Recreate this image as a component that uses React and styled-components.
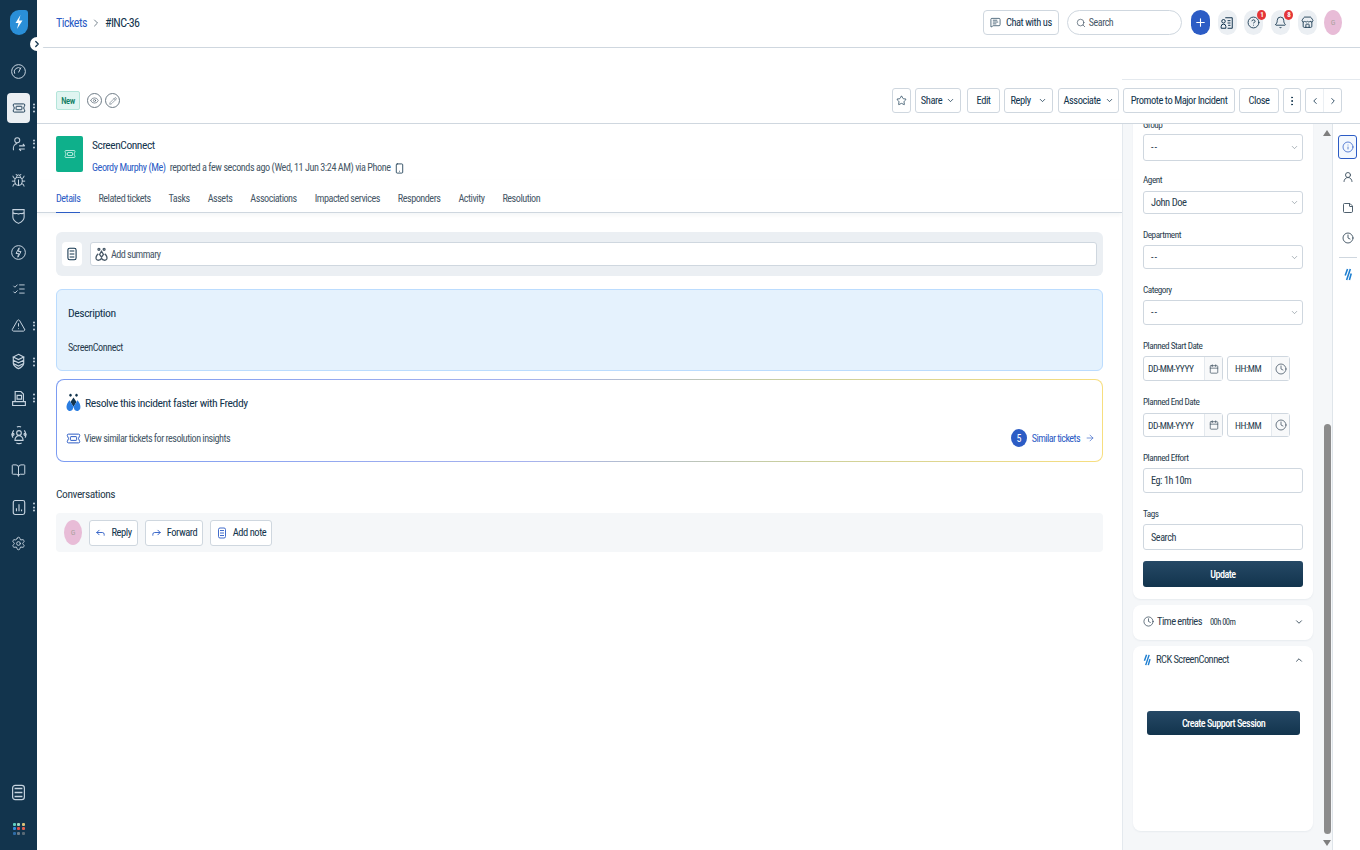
import React from "react";
import styled, { createGlobalStyle } from "styled-components";
import {
  ChevronDown, ChevronUp, ChevronLeft, ChevronRight, Star, Search, Plus, Eye, Pencil, Smartphone,
  Reply as ReplyIcon, Forward, ArrowRight, Calendar, Clock, Info, Bell, CircleHelp, Store, MessageSquareText,
  EllipsisVertical, Bug, ListChecks, TriangleAlert, BookOpen, Settings, UserRound, StickyNote,
} from "lucide-react";

const GlobalStyle = createGlobalStyle`
  html, body { margin: 0; padding: 0; height: 100%; background: #fff; }
  body {
    font-family: "Roboto", "Liberation Sans", sans-serif;
    font-stretch: 75%;
    letter-spacing: -0.45px;
    white-space: nowrap;
    color: #12344d;
    overflow: hidden;
  }
  * { box-sizing: border-box; }
  button { letter-spacing: inherit; font-stretch: inherit; }
`;

const Page = styled.div`
  display: flex;
  width: 1360px;
  height: 850px;
  overflow: hidden;
`;

/* left nav */
const Sidebar = styled.nav`
  position: relative;
  width: 37px;
  flex: none;
  background: #12344d;
  display: flex;
  flex-direction: column;
  align-items: center;
  padding: 10px 0 3px;
`;
const Logo = styled.div`
  height: 43px;
  width: 100%;
  display: flex;
  justify-content: center;
  align-items: flex-start;
`;
const NavItem = styled.div`
  position: relative;
  width: 37px;
  height: 36.35px;
  flex: none;
  display: flex;
  align-items: center;
  justify-content: center;
  color: #c6d3df;
`;
const ActiveTile = styled.div`
  width: 23px;
  height: 30px;
  border-radius: 4px;
  background: #ebeff3;
  color: #12344d;
  display: flex;
  align-items: center;
  justify-content: center;
`;
const NavDots = styled.span`
  position: absolute;
  right: 2px;
  top: 50%;
  transform: translateY(-50%);
  display: flex;
  flex-direction: column;
  gap: 1.5px;
  i { width: 2px; height: 2px; background: #c6d3df; border-radius: 50%; display: block; }
`;
const Collapse = styled.button`
  position: absolute;
  top: 37px;
  left: 30px;
  width: 14px;
  height: 14px;
  padding: 0;
  border: none;
  border-radius: 50%;
  background: #fff;
  color: #12344d;
  display: flex;
  align-items: center;
  justify-content: center;
  z-index: 2;
`;
const NavBottom = styled.div`
  margin-top: auto;
  display: flex;
  flex-direction: column;
`;
const AppsGrid = styled.div`
  display: grid;
  grid-template-columns: repeat(3, 3px);
  gap: 1.5px;
`;
const AppDot = styled.i`
  width: 3px;
  height: 3px;
  border-radius: 1px;
  display: block;
  background: ${(p) => p.$c};
`;

/* main */
const Main = styled.div`
  flex: 1;
  min-width: 0;
  display: flex;
  flex-direction: column;
`;
const TopBar = styled.header`
  height: 48px;
  flex: none;
  border-bottom: 1px solid #cfd7df;
  display: flex;
  align-items: center;
  padding: 0 18px 2px 19px;
`;
const Crumb = styled.a`
  color: #2c5cc5;
  font-size: 12px;
  letter-spacing: -0.5px;
`;
const CrumbCurrent = styled.span`
  color: #12344d;
  font-size: 12px;
  letter-spacing: -0.6px;
`;
const CrumbSep = styled.span`
  display: flex;
  margin: 0 3px 0 3px;
  color: #475867;
`;
const TopRight = styled.div`
  margin-left: auto;
  display: flex;
  align-items: center;
`;
const ChatBtn = styled.button`
  width: 76px;
  height: 25px;
  border: 1px solid #cfd7df;
  border-radius: 4px;
  background: #fff;
  color: #12344d;
  font: inherit;
  font-size: 10.5px;
  display: flex;
  align-items: center;
  justify-content: center;
  gap: 5px;
  padding: 0;
`;
const SearchBox = styled.div`
  width: 115px;
  height: 25px;
  margin-left: 8px;
  border: 1px solid #cfd7df;
  border-radius: 13px;
  display: flex;
  align-items: center;
  gap: 3px;
  padding-left: 8px;
  font-size: 10px;
  color: #475867;
`;
const PlusBtn = styled.div`
  width: 19px;
  height: 25px;
  margin-left: 9px;
  border-radius: 10px;
  background: #2c5cc5;
  color: #fff;
  display: flex;
  align-items: center;
  justify-content: center;
`;
const RoundIcon = styled.div`
  position: relative;
  width: 19px;
  height: 25px;
  margin-left: 7.8px;
  border-radius: 10px;
  background: #ebeff3;
  color: #12344d;
  display: flex;
  align-items: center;
  justify-content: center;
`;
const CountBadge = styled.span`
  position: absolute;
  top: 0;
  right: -3px;
  width: 9px;
  height: 10px;
  border-radius: 50%;
  background: #e43538;
  color: #fff;
  font-size: 7px;
  font-weight: 700;
  line-height: 10px;
  text-align: center;
`;
const Avatar = styled.div`
  width: 18px;
  height: 25px;
  margin-left: ${(p) => p.$ml || 0}px;
  border-radius: 50%;
  background: #e8bcd7;
  color: #a9a19c;
  font-size: 8px;
  display: flex;
  align-items: center;
  justify-content: center;
  flex: none;
`;

const ActionBar = styled.div`
  position: relative;
  height: 39px;
  flex: none;
  margin-top: 37px;
  border-bottom: 1px solid #cfd7df;
  display: flex;
  align-items: center;
  padding: 0 18px 7px 19px;
  &::after {
    content: "";
    position: absolute;
    top: -6px;
    right: 0;
    width: 238px;
    height: 1px;
    background: #e4e9ee;
  }
`;
const NewTag = styled.span`
  width: 24px;
  height: 19px;
  border: 1px solid #b4e5da;
  border-radius: 2px;
  background: #e0f5f1;
  color: #0c7c62;
  font-size: 8.5px;
  font-weight: 500;
  display: flex;
  align-items: center;
  justify-content: center;
`;
const CircleBtn = styled.span`
  width: 15px;
  height: 15px;
  margin-left: ${(p) => p.$ml}px;
  border: 1px solid #6f7c87;
  border-radius: 50%;
  color: #475867;
  display: flex;
  align-items: center;
  justify-content: center;
`;
const ActionGroup = styled.div`
  margin-left: auto;
  display: flex;
  align-items: center;
`;
const ActionBtn = styled.button`
  width: ${(p) => p.$w}px;
  height: 25px;
  margin-left: ${(p) => p.$ml ?? 4}px;
  padding: 0;
  border: 1px solid #cfd7df;
  border-radius: 3px;
  background: #fff;
  color: #12344d;
  font: inherit;
  font-size: 10.5px;
  display: flex;
  align-items: center;
  justify-content: center;
  gap: ${(p) => p.$gap ?? 4}px;
`;
const NavPair = styled.div`
  width: 37px;
  height: 25px;
  margin-left: 4px;
  border: 1px solid #cfd7df;
  border-radius: 3px;
  display: flex;
  span { flex: 1; display: flex; align-items: center; justify-content: center; }
  span + span { border-left: 1px solid #ebeff3; }
`;

const Body = styled.div`
  flex: 1;
  min-height: 0;
  display: flex;
`;
const Left = styled.div`
  width: 1085px;
  flex: none;
  display: flex;
  flex-direction: column;
`;
const TicketHead = styled.div`
  display: flex;
  gap: 9px;
  padding: 12px 19px 0;
`;
const TicketIcon = styled.div`
  width: 27px;
  height: 36px;
  border-radius: 2px;
  background: #0eb08b;
  color: #d6f3ec;
  display: flex;
  align-items: center;
  justify-content: center;
`;
const TicketTitle = styled.div`
  font-size: 11.5px;
  line-height: 16px;
  margin-top: 1px;
`;
const TicketMeta = styled.div`
  display: flex;
  align-items: center;
  font-size: 10.2px;
  line-height: 14px;
  margin-top: 8px;
  color: #475867;
  letter-spacing: -0.45px;
  a { color: #2c5cc5; margin-right: 4px; }
`;
const Tabs = styled.div`
  display: flex;
  gap: 18px;
  height: 33px;
  margin-top: 5px;
  padding-left: 19px;
  border-bottom: 1px solid #cfd7df;
  box-shadow: 0 2px 4px rgba(18, 52, 77, 0.05);
`;
const Tab = styled.span`
  height: 33px;
  padding: 12px 0 0;
  font-size: 10.2px;
  line-height: 14px;
  letter-spacing: -0.49px;
  color: ${(p) => (p.$active ? "#2c5cc5" : "#475867")};
  border-bottom: ${(p) => (p.$active ? "1px solid #2c5cc5" : "none")};
`;
const Content = styled.div`
  padding: 19px 19px 0;
  display: flex;
  flex-direction: column;
`;
const SummaryBox = styled.div`
  height: 44px;
  border-radius: 6px;
  background: #ebeff3;
  display: flex;
  align-items: center;
  gap: 8px;
  padding: 0 6px;
`;
const SummaryIcon = styled.div`
  width: 20px;
  height: 24px;
  border-radius: 4px;
  background: #fff;
  display: flex;
  align-items: center;
  justify-content: center;
`;
const SummaryInput = styled.div`
  flex: 1;
  height: 24px;
  border: 1px solid #cfd7df;
  border-radius: 3px;
  background: #fff;
  color: #475867;
  font-size: 10.2px;
  letter-spacing: -0.55px;
  display: flex;
  align-items: center;
  gap: 3px;
  padding-left: 4px;
`;
const DescriptionCard = styled.div`
  height: 82px;
  margin-top: 13px;
  border: 1px solid #bbdcfe;
  border-radius: 6px;
  background: #e5f2fd;
  padding: 15px 11px;
`;
const CardTitle = styled.div`
  font-size: 11.7px;
  line-height: 16px;
  color: #12344d;
`;
const DescText = styled.div`
  font-size: 10.2px;
  line-height: 14px;
  margin-top: 20px;
  color: #283c4d;
`;
const FreddyCard = styled.div`
  height: 83px;
  margin-top: 8px;
  border: 1.5px solid transparent;
  border-radius: 8px;
  background: linear-gradient(#fff, #fff) padding-box,
    linear-gradient(90deg, #7c9cf2 0%, #a6b2ee 45%, #c9cf9e 70%, #f7de7f 100%) border-box;
  padding: 11px 7px 0 9px;
  display: flex;
  flex-direction: column;
`;
const FreddyHead = styled.div`
  display: flex;
  align-items: center;
  gap: 4px;
  height: 24px;
`;
const FreddyRow = styled.div`
  display: flex;
  align-items: center;
  margin-top: 15px;
  height: 16px;
  font-size: 10.2px;
  letter-spacing: -0.52px;
  color: #475867;
  gap: 3px;
`;
const SimilarLink = styled.a`
  margin-left: auto;
  display: flex;
  align-items: center;
  gap: 5px;
  color: #2c5cc5;
  font-size: 10.2px;
  letter-spacing: -0.6px;
`;
const CountCircle = styled.span`
  width: 16px;
  height: 18px;
  border-radius: 50%;
  background: #2c5cc5;
  color: #fff;
  font-size: 10px;
  display: flex;
  align-items: center;
  justify-content: center;
`;
const SectionTitle = styled.div`
  margin-top: 24px;
  font-size: 11.5px;
  line-height: 16px;
  color: #283c4d;
`;
const ReplyBar = styled.div`
  height: 39px;
  margin-top: 11px;
  border-radius: 4px;
  background: #f5f7f9;
  display: flex;
  align-items: center;
  padding: 0 8px;
  gap: 7px;
`;
const ReplyBtn = styled.button`
  width: ${(p) => p.$w}px;
  height: 26px;
  padding: 0;
  border: 1px solid #cfd7df;
  border-radius: 3px;
  background: #fff;
  color: #12344d;
  font: inherit;
  font-size: 10.5px;
  display: flex;
  align-items: center;
  justify-content: center;
  gap: 5px;
`;

/* right column */
const Panel = styled.aside`
  width: 211px;
  flex: none;
  background: #f5f7f9;
  border-left: 1px solid #e4e9ee;
  border-right: 1px solid #dfe5ea;
  display: flex;
  overflow: hidden;
`;
const PanelScroll = styled.div`
  width: 190px;
  flex: none;
  padding-left: 10px;
  display: flex;
  flex-direction: column;
  gap: 6px;
`;
const Card = styled.section`
  flex: none;
  background: #fff;
  border-radius: 8px;
  box-shadow: 0 1px 2px rgba(18, 52, 77, 0.06);
  padding: ${(p) => p.$pad || "0 10px"};
  margin-top: ${(p) => p.$mt || 0}px;
  height: ${(p) => (p.$h ? `${p.$h}px` : "auto")};
`;
const Field = styled.div`
  margin-bottom: ${(p) => p.$mb ?? 15}px;
`;
const Label = styled.div`
  font-size: 9.2px;
  line-height: 12px;
  letter-spacing: -0.47px;
  margin-bottom: ${(p) => p.$mb ?? 4}px;
  color: #283c4d;
`;
const InputBox = styled.div`
  width: ${(p) => (p.$w ? `${p.$w}px` : "100%")};
  height: ${(p) => p.$h || 25}px;
  border: 1px solid #cfd7df;
  border-radius: 3px;
  background: #fff;
  display: flex;
  align-items: center;
  justify-content: space-between;
  padding-left: ${(p) => p.$pl ?? 7}px;
  padding-right: ${(p) => p.$pr ?? 3}px;
  font-size: ${(p) => p.$fs || 10.2}px;
  color: #283c4d;
`;
const DashValue = styled.span`
  letter-spacing: 1px;
`;
const DateRow = styled.div`
  display: flex;
  gap: 4px;
`;
const Addon = styled.span`
  height: 100%;
  width: ${(p) => p.$w}px;
  padding: 3px 0;
  display: flex;
  align-items: center;
  justify-content: center;
  border-left: 1px solid #e4e9ee;
  background: #f8f9fa;
  color: #475867;
`;
const PrimaryBtn = styled.button`
  display: block;
  width: ${(p) => p.$w || "100%"};
  height: ${(p) => p.$h || 26}px;
  margin: ${(p) => p.$m || 0};
  border: none;
  border-radius: 3px;
  background: linear-gradient(#264966, #12344d);
  color: #fff;
  font: inherit;
  font-size: 10.2px;
  font-weight: 500;
  letter-spacing: -0.55px;
`;
const AccordionHead = styled.div`
  display: flex;
  align-items: center;
  gap: ${(p) => p.$gap ?? 4}px;
  font-size: 10.5px;
  letter-spacing: -0.55px;
  height: ${(p) => p.$h}px;
  color: #283c4d;
  small { font-size: 8.5px; margin-left: 5px; }
  svg:last-child { margin-left: auto; margin-right: -1px; }
`;
const ScrollTrack = styled.div`
  width: 10px;
  flex: none;
  margin-left: 9px;
  display: flex;
  flex-direction: column;
  align-items: center;
  padding: 6px 0 4px;
`;
const Arrow = styled.span`
  width: 0;
  height: 0;
  border-left: 4px solid transparent;
  border-right: 4px solid transparent;
  border-${(p) => (p.$down ? "top" : "bottom")}: 6px solid #7f7f7f;
  flex: none;
`;
const Thumb = styled.div`
  width: 7px;
  height: 410px;
  margin-top: auto;
  margin-bottom: 6px;
  border-radius: 4px;
  background: #8c8c8c;
`;
const Rail = styled.div`
  width: 27px;
  flex: none;
  display: flex;
  flex-direction: column;
  align-items: center;
  padding: 11px 0 0 2px;
  color: #475867;
`;
const RailActive = styled.div`
  width: 19px;
  height: 24px;
  border: 1px solid #2c5cc5;
  border-radius: 3px;
  background: #f3f8fe;
  color: #2c5cc5;
  display: flex;
  align-items: center;
  justify-content: center;
`;
const RailItem = styled.div`
  height: 30.5px;
  display: flex;
  align-items: center;
  justify-content: center;
  &:nth-child(2) { margin-top: 3px; }
`;
const RailRule = styled.div`
  width: 18px;
  height: 1px;
  margin: 3px 0 10px;
  background: #cfd7df;
`;

const TicketGlyph = ({ size = 14, color = "currentColor", sw = 1.6 }) => (
  <svg width={size} height={size} viewBox="0 0 24 24" fill="none" stroke={color} strokeWidth={sw}>
    <path d="M4 5h16a2 2 0 0 1 2 2c0 2-2 3-2 5s2 3 2 5a2 2 0 0 1-2 2H4a2 2 0 0 1-2-2c0-2 2-3 2-5S2 9 2 7a2 2 0 0 1 2-2z" />
    <rect x="7" y="9" width="10" height="6" rx="1" />
  </svg>
);
const CircledGauge = () => (
  <svg width="15" height="17" viewBox="0 0 24 27" fill="none" stroke="currentColor" strokeWidth="1.6">
    <circle cx="12" cy="13.5" r="11" />
    <path d="M6 17a6.5 6.5 0 0 1 10-8M12 15l4-8" />
  </svg>
);
const UserSwap = () => (
  <svg width="15" height="16" viewBox="0 0 24 24" fill="none" stroke="currentColor" strokeWidth="1.7">
    <circle cx="10" cy="6" r="4" />
    <path d="M4 22c-1-5 1-10 6-11" />
    <path d="M13 15h9M13 20h9M19 12l3 3M16 23l-3-3" />
  </svg>
);
const ShieldBadge = () => (
  <svg width="15" height="17" viewBox="0 0 24 26" fill="none" stroke="currentColor" strokeWidth="1.7">
    <path d="M3 2h18v12c0 5-5 8-9 10-4-2-9-5-9-10z" />
    <path d="M3 7c3 3 6 0 9 2 3-2 6 1 9-2" />
  </svg>
);
const CircledBolt = () => (
  <svg width="15" height="17" viewBox="0 0 24 27" fill="none" stroke="currentColor" strokeWidth="1.6">
    <circle cx="12" cy="13.5" r="11" />
    <path d="M13 6 8 15h4l-1 6 5-9h-4z" />
  </svg>
);
const StackedLayers = () => (
  <svg width="13" height="17" viewBox="0 0 20 26" fill="none" stroke="currentColor" strokeWidth="1.8">
    <path d="M10 2l8 4-8 4-8-4zM2 11l8 4 8-4M2 16l8 4 8-4M2 6v10M18 6v10M2 16c0 3 5 7 8 8 3-1 8-5 8-8" />
  </svg>
);
const DocTray = () => (
  <svg width="14" height="17" viewBox="0 0 22 26" fill="none" stroke="currentColor" strokeWidth="1.8">
    <path d="M5 17V2h9l4 4v11M1 18h20v6H1zM8 8h7v6H8z" />
  </svg>
);
const Orbit = () => (
  <svg width="16" height="20" viewBox="0 0 24 30" fill="none" stroke="currentColor" strokeWidth="1.7">
    <circle cx="12" cy="12" r="3.5" />
    <path d="M6 22c0-3 3-6 6-6s6 3 6 6v1H6z" />
    <path d="M9 3c1-1 5-1 6 0M4 8C2 11 1 16 3 19M20 8c2 3 3 8 1 11M8 27c2 1 6 1 8 0" />
    <circle cx="3" cy="14" r="1.5" /><circle cx="21" cy="14" r="1.5" />
  </svg>
);
const ReportCard = () => (
  <svg width="14" height="17" viewBox="0 0 22 26" fill="none" stroke="currentColor" strokeWidth="1.8">
    <rect x="2" y="2" width="18" height="22" rx="3" />
    <path d="M7 19v-5M11 19V8M15 19v-3" />
  </svg>
);
const ListDoc = () => (
  <svg width="15" height="17" viewBox="0 0 22 26" fill="none" stroke="currentColor" strokeWidth="1.8">
    <rect x="2" y="2" width="18" height="22" rx="4" />
    <path d="M5 7h12M5 13h12M5 19h12" strokeWidth="2.4" />
  </svg>
);
const LogoMark = () => (
  <svg width="18" height="25" viewBox="0 0 18 25">
    <path d="M9 0h6a3 3 0 0 1 3 3v13a9 9 0 0 1-18 0V9a9 9 0 0 1 9-9z" fill="#2a8fd8" />
    <path d="M10.5 5 5.5 13h3l-1.5 6 5.5-8.5H9z" fill="#fff" />
  </svg>
);
const SlashMark = ({ h = 12 }) => (
  <svg width="8" height={h} viewBox="0 0 8 14" fill="none" stroke="#1f7fd0" strokeWidth="1.7">
    <path d="M3.5 1 1 8M6.5 1 2.5 13M7.5 6 5.5 13" />
  </svg>
);
const FreddyGlyph = () => (
  <svg width="15" height="20" viewBox="0 0 20 22" preserveAspectRatio="none">
    <circle cx="6" cy="2.5" r="1.6" fill="#12344d" />
    <circle cx="14" cy="2.5" r="1.6" fill="#12344d" />
    <path d="M10 5 14 10 10 15 6 10z" fill="#12344d" />
    <path d="M5 8c-3 2-5 6-4 9 1 3 6 4 8 1l1-3-4-5zM15 8c3 2 5 6 4 9-1 3-6 4-8 1l-1-3 4-5z" fill="#2a7de1" />
  </svg>
);
const FreddySmall = () => (
  <svg width="13" height="15" viewBox="0 0 20 22" fill="none" stroke="#475867" strokeWidth="2">
    <circle cx="6" cy="3" r="1.5" /><circle cx="14" cy="3" r="1.5" />
    <path d="M10 6l3 5-3 4-3-4zM5 10c-3 2-4 6-3 8 2 3 6 2 8-1 2 3 6 4 8 1 1-2 0-6-3-8" />
  </svg>
);
const NoteLines = ({ color = "#12344d", size = 14 }) => (
  <svg width={size} height={size} viewBox="0 0 24 24" fill="none" stroke={color} strokeWidth="1.8">
    <rect x="5" y="2" width="14" height="20" rx="3" />
    <path d="M8 7h8M8 12h8M8 17h8" />
  </svg>
);
const AgentList = () => (
  <svg width="14" height="14" viewBox="0 0 24 24" fill="none" stroke="currentColor" strokeWidth="1.7">
    <circle cx="6" cy="9" r="3" /><path d="M2 21v-3a4 4 0 0 1 8 0v3z" />
    <path d="M9 3h12v18h-8M13 8h5M13 12h5M14 16h4" />
  </svg>
);
const Dots = () => <NavDots><i /><i /><i /></NavDots>;

const navItems = [
  { icon: <CircledGauge /> },
  { icon: <ActiveTile><TicketGlyph size={14} /></ActiveTile>, dots: true },
  { icon: <UserSwap />, dots: true },
  { icon: <Bug size={15} strokeWidth={1.6} /> },
  { icon: <ShieldBadge /> },
  { icon: <CircledBolt /> },
  { icon: <ListChecks size={14} strokeWidth={1.6} /> },
  { icon: <TriangleAlert size={15} strokeWidth={1.6} />, dots: true },
  { icon: <StackedLayers />, dots: true },
  { icon: <DocTray />, dots: true },
  { icon: <Orbit /> },
  { icon: <BookOpen size={15} strokeWidth={1.6} /> },
  { icon: <ReportCard />, dots: true },
  { icon: <Settings size={15} strokeWidth={1.5} /> },
];
const appColors = ["#5fd0c0", "#9fd6c0", "#d8c27a", "#3b8fe0", "#e0504a", "#e2604e", "#2e6ca8", "#6f7c87", "#5a6a76"];
const tabs = ["Details", "Related tickets", "Tasks", "Assets", "Associations", "Impacted services", "Responders", "Activity", "Resolution"];

const SelectField = ({ label, value, h, mb, labelMb, fs }) => (
  <Field $mb={mb}>
    <Label $mb={labelMb}>{label}</Label>
    <InputBox $h={h} $fs={fs}>
      {value === "--" ? <DashValue>--</DashValue> : value}
      <ChevronDown size={9} strokeWidth={1.5} color="#6f7c87" />
    </InputBox>
  </Field>
);
const DateField = ({ label, h, labelMb }) => (
  <Field>
    <Label $mb={labelMb}>{label}</Label>
    <DateRow>
      <InputBox $w={80} $h={h} $pl={4} $pr={0} $fs={9.5}>
        DD-MM-YYYY
        <Addon $w={18}><Calendar size={10} strokeWidth={1.8} /></Addon>
      </InputBox>
      <InputBox $w={63} $h={h} $pl={7} $pr={0} $fs={9.5}>
        HH:MM
        <Addon $w={18}><Clock size={12} strokeWidth={1.6} /></Addon>
      </InputBox>
    </DateRow>
  </Field>
);

export default function App() {
  return (
    <Page>
      <GlobalStyle />
      <Sidebar>
        <Logo><LogoMark /></Logo>
        <Collapse><ChevronRight size={10} strokeWidth={3} /></Collapse>
        {navItems.map((item, i) => (
          <NavItem key={i}>
            {item.icon}
            {item.dots && <Dots />}
          </NavItem>
        ))}
        <NavBottom>
          <NavItem><ListDoc /></NavItem>
          <NavItem>
            <AppsGrid>{appColors.map((c) => <AppDot key={c} $c={c} />)}</AppsGrid>
          </NavItem>
        </NavBottom>
      </Sidebar>

      <Main>
        <TopBar>
          <Crumb>Tickets</Crumb>
          <CrumbSep><ChevronRight size={12} strokeWidth={1.5} /></CrumbSep>
          <CrumbCurrent>#INC-36</CrumbCurrent>
          <TopRight>
            <ChatBtn><MessageSquareText size={11} strokeWidth={1.5} />Chat with us</ChatBtn>
            <SearchBox><Search size={10} strokeWidth={1.7} />Search</SearchBox>
            <PlusBtn><Plus size={13} strokeWidth={2} /></PlusBtn>
            <RoundIcon><AgentList /></RoundIcon>
            <RoundIcon><CircleHelp size={13} strokeWidth={1.6} /><CountBadge>1</CountBadge></RoundIcon>
            <RoundIcon><Bell size={13} strokeWidth={1.6} /><CountBadge>8</CountBadge></RoundIcon>
            <RoundIcon><Store size={13} strokeWidth={1.6} /></RoundIcon>
            <Avatar $ml={7}>G</Avatar>
          </TopRight>
        </TopBar>

        <ActionBar>
          <NewTag>New</NewTag>
          <CircleBtn $ml={7}><Eye size={9} strokeWidth={1.6} /></CircleBtn>
          <CircleBtn $ml={3}><Pencil size={8} strokeWidth={1.6} /></CircleBtn>
          <ActionGroup>
            <ActionBtn $w={19} $ml={0}><Star size={11} strokeWidth={1.5} /></ActionBtn>
            <ActionBtn $w={46}>Share <ChevronDown size={9} /></ActionBtn>
            <ActionBtn $w={33} $ml={6}>Edit</ActionBtn>
            <ActionBtn $w={49} $gap={7}>Reply <ChevronDown size={9} /></ActionBtn>
            <ActionBtn $w={61} $ml={5}>Associate <ChevronDown size={9} /></ActionBtn>
            <ActionBtn $w={112}>Promote to Major Incident</ActionBtn>
            <ActionBtn $w={40}>Close</ActionBtn>
            <ActionBtn $w={18}><EllipsisVertical size={12} /></ActionBtn>
            <NavPair>
              <span><ChevronLeft size={10} /></span>
              <span><ChevronRight size={10} /></span>
            </NavPair>
          </ActionGroup>
        </ActionBar>

        <Body>
          <Left>
            <TicketHead>
              <TicketIcon><TicketGlyph size={12} /></TicketIcon>
              <div>
                <TicketTitle>ScreenConnect</TicketTitle>
                <TicketMeta>
                  <a>Geordy Murphy (Me)</a> reported a few seconds ago (Wed, 11 Jun 3:24 AM) via Phone
                  <Smartphone size={11} strokeWidth={1.8} color="#12344d" style={{ marginLeft: 4 }} />
                </TicketMeta>
              </div>
            </TicketHead>
            <Tabs>
              {tabs.map((t, i) => <Tab key={t} $active={i === 0}>{t}</Tab>)}
            </Tabs>
            <Content>
              <SummaryBox>
                <SummaryIcon><NoteLines /></SummaryIcon>
                <SummaryInput><FreddySmall />Add summary</SummaryInput>
              </SummaryBox>
              <DescriptionCard>
                <CardTitle>Description</CardTitle>
                <DescText>ScreenConnect</DescText>
              </DescriptionCard>
              <FreddyCard>
                <FreddyHead>
                  <FreddyGlyph />
                  <CardTitle>Resolve this incident faster with Freddy</CardTitle>
                </FreddyHead>
                <FreddyRow>
                  <TicketGlyph size={15} color="#2c5cc5" />
                  View similar tickets for resolution insights
                  <SimilarLink>
                    <CountCircle>5</CountCircle>
                    Similar tickets
                    <ArrowRight size={10} strokeWidth={1.5} />
                  </SimilarLink>
                </FreddyRow>
              </FreddyCard>
              <SectionTitle>Conversations</SectionTitle>
              <ReplyBar>
                <Avatar>G</Avatar>
                <ReplyBtn $w={49}><ReplyIcon size={11} color="#2c5cc5" />Reply</ReplyBtn>
                <ReplyBtn $w={58}><Forward size={11} color="#2c5cc5" />Forward</ReplyBtn>
                <ReplyBtn $w={62}><NoteLines color="#2c5cc5" size={12} />Add note</ReplyBtn>
              </ReplyBar>
            </Content>
          </Left>

          <Panel>
            <PanelScroll>
              <Card $mt={-20} $pad="15px 10px 12px">
                <SelectField label="Group" value="--" h={27} mb={13} labelMb={3} />
                <SelectField label="Agent" value="John Doe" h={23} labelMb={5} fs={10.5} />
                <SelectField label="Department" value="--" h={24} />
                <SelectField label="Category" value="--" />
                <DateField label="Planned Start Date" h={25} />
                <DateField label="Planned End Date" h={24} labelMb={5} />
                <Field><Label>Planned Effort</Label><InputBox>Eg: 1h 10m</InputBox></Field>
                <Field $mb={11}><Label>Tags</Label><InputBox $h={26}>Search</InputBox></Field>
                <PrimaryBtn>Update</PrimaryBtn>
              </Card>
              <Card $h={35}>
                <AccordionHead $h={33} $gap={3}>
                  <Clock size={11} strokeWidth={1.5} /> Time entries <small>00h 00m</small>
                  <ChevronDown size={10} />
                </AccordionHead>
              </Card>
              <Card $h={185}>
                <AccordionHead $h={27} $gap={5}>
                  <SlashMark /> RCK ScreenConnect
                  <ChevronUp size={10} />
                </AccordionHead>
                <PrimaryBtn $w="153px" $h={24} $m="38px 0 0 4px">Create Support Session</PrimaryBtn>
              </Card>
            </PanelScroll>
            <ScrollTrack>
              <Arrow />
              <Thumb />
              <Arrow $down />
            </ScrollTrack>
          </Panel>

          <Rail>
            <RailActive><Info size={12} strokeWidth={1.5} /></RailActive>
            <RailItem><UserRound size={12} strokeWidth={1.9} /></RailItem>
            <RailItem><StickyNote size={12} strokeWidth={1.9} /></RailItem>
            <RailItem><Clock size={12} strokeWidth={1.9} /></RailItem>
            <RailRule />
            <SlashMark h={13} />
          </Rail>
        </Body>
      </Main>
    </Page>
  );
}
